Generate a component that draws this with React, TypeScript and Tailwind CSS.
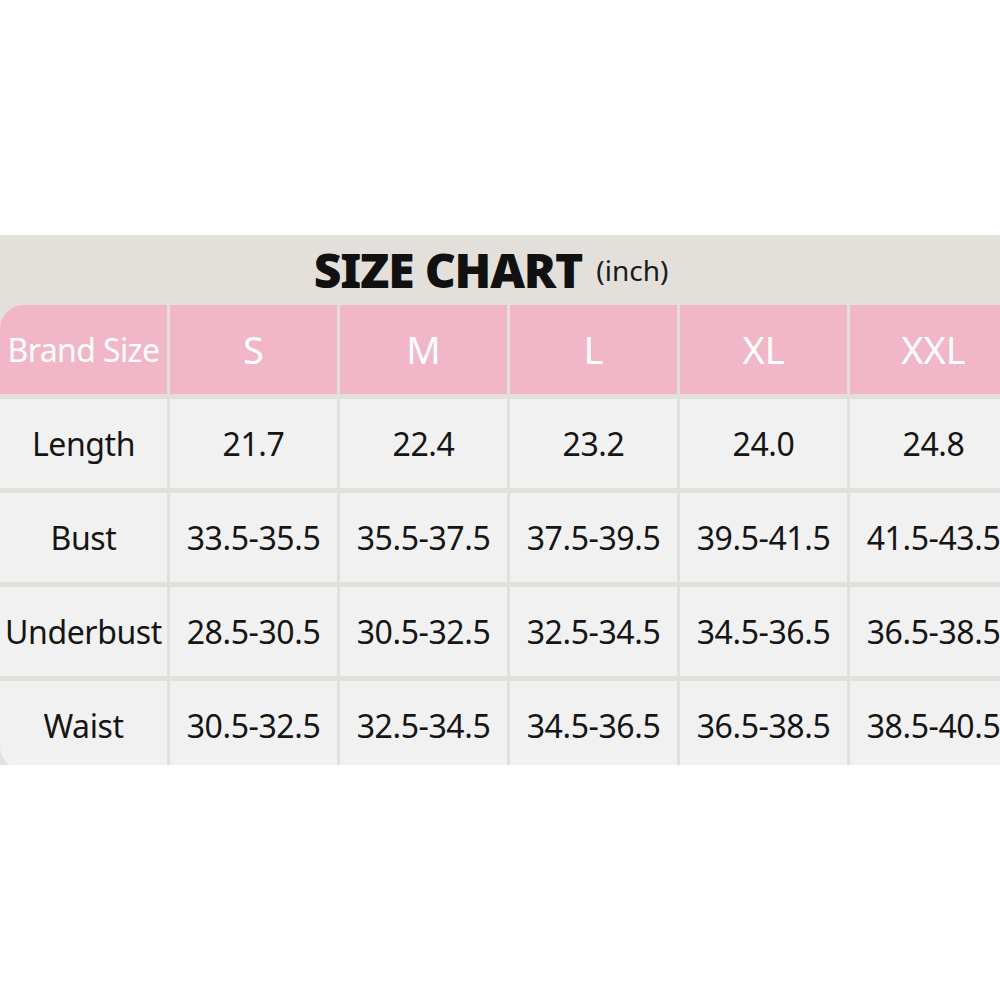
import React from 'react';

const sizes = ['S', 'M', 'L', 'XL', 'XXL'];

const rows: { label: string; values: string[] }[] = [
  { label: 'Length', values: ['21.7', '22.4', '23.2', '24.0', '24.8'] },
  { label: 'Bust', values: ['33.5-35.5', '35.5-37.5', '37.5-39.5', '39.5-41.5', '41.5-43.5'] },
  { label: 'Underbust', values: ['28.5-30.5', '30.5-32.5', '32.5-34.5', '34.5-36.5', '36.5-38.5'] },
  { label: 'Waist', values: ['30.5-32.5', '32.5-34.5', '34.5-36.5', '36.5-38.5', '38.5-40.5'] },
];

export default function App() {
  return (
    <div className="w-[1000px] h-[1000px] bg-white overflow-hidden font-['Noto_Sans',sans-serif]">
      <div className="h-[235px]" />

      {/* Chart band */}
      <section className="h-[530px] bg-[#e3e0dc] overflow-hidden">
        <div className="h-[70px] flex items-center justify-center gap-[14px] pr-[18px]">
          <h1 className="text-[48px] font-black text-[#111] tracking-[-1.2px] leading-none">SIZE CHART</h1>
          <span className="text-[28px] text-[#1a1a1a] leading-none">(inch)</span>
        </div>

        <div className="grid grid-cols-[repeat(6,167px)] gap-x-[3px] gap-y-[5px] auto-rows-[89px] w-[1017px]">
          {/* Header */}
          <div className="bg-[#f1b6c7] rounded-tl-[24px] flex items-center justify-center text-white text-[32px] tracking-[-0.6px]">
            Brand Size
          </div>
          {sizes.map((s) => (
            <div key={s} className="bg-[#f1b6c7] flex items-center justify-center text-white text-[38px]">
              {s}
            </div>
          ))}

          {rows.map((row, i) => (
            <React.Fragment key={row.label}>
              <div
                className={
                  'bg-[#f1f1f1] flex items-center justify-center text-[#151515] text-[32px] tracking-[-0.4px] ' +
                  (i === rows.length - 1 ? 'rounded-bl-[24px]' : '')
                }
              >
                {row.label}
              </div>
              {row.values.map((v, j) => (
                <div
                  key={j}
                  className="bg-[#f1f1f1] flex items-center justify-center text-[#151515] text-[32px] tracking-[-0.4px]"
                >
                  {v}
                </div>
              ))}
            </React.Fragment>
          ))}
        </div>
      </section>
    </div>
  );
}
